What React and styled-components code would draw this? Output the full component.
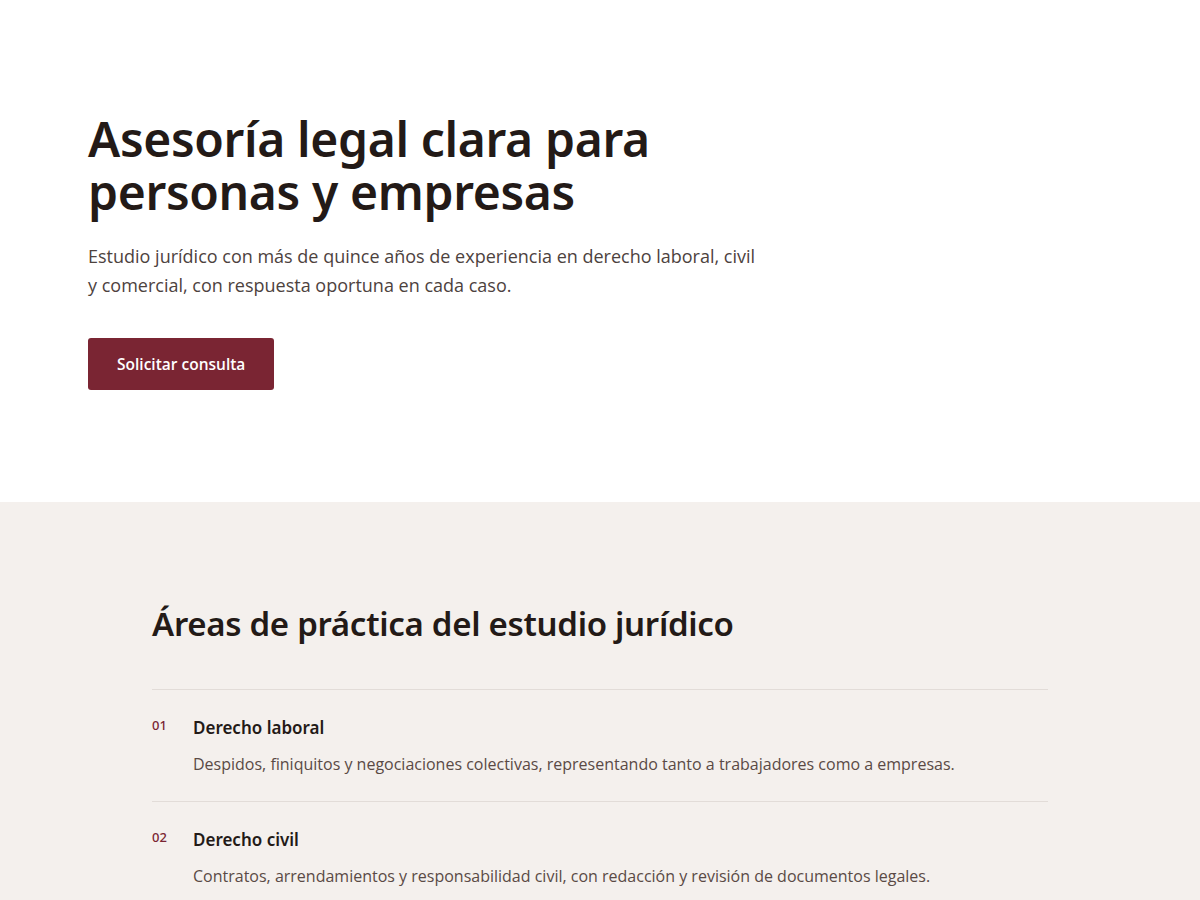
import styled, { createGlobalStyle } from 'styled-components'

const GlobalStyle = createGlobalStyle`
  * { box-sizing: border-box; }
  body {
    margin: 0;
    background: #ffffff;
    font-family: 'Open Sans', 'Noto Sans', sans-serif;
    color: #231a17;
  }
  h1, h2, h3, p { margin: 0; }
`

const areas = [
  {
    num: '01',
    title: 'Derecho laboral',
    text: 'Despidos, finiquitos y negociaciones colectivas, representando tanto a trabajadores como a empresas.',
  },
  {
    num: '02',
    title: 'Derecho civil',
    text: 'Contratos, arrendamientos y responsabilidad civil, con redacción y revisión de documentos legales.',
  },
]

function App() {
  return (
    <>
      <GlobalStyle />
      <Hero>
        <HeroInner>
          <Title>Asesoría legal clara para personas y empresas</Title>
          <Lead>
            Estudio jurídico con más de quince años de experiencia en derecho
            laboral, civil y comercial, con respuesta oportuna en cada caso.
          </Lead>
          <Button>Solicitar consulta</Button>
        </HeroInner>
      </Hero>
      <Areas>
        <AreasInner>
          <SectionTitle>Áreas de práctica del estudio jurídico</SectionTitle>
          <List>
            {areas.map((area) => (
              <Item key={area.num}>
                <Num>{area.num}</Num>
                <ItemBody>
                  <ItemTitle>{area.title}</ItemTitle>
                  <ItemText>{area.text}</ItemText>
                </ItemBody>
              </Item>
            ))}
          </List>
        </AreasInner>
      </Areas>
    </>
  )
}

export default App

const Hero = styled.section`
  background: #ffffff;
  padding: 113px 88px 112px;
`

const HeroInner = styled.div`
  max-width: 1024px;
`

const Title = styled.h1`
  font-family: 'Noto Sans', 'Open Sans', sans-serif;
  font-weight: 600;
  font-size: 48px;
  line-height: 1.1;
  letter-spacing: -0.35px;
  color: #231a17;
  max-width: 600px;
`

const Lead = styled.p`
  margin-top: 23px;
  max-width: 674px;
  font-size: 18px;
  line-height: 29px;
  color: #4d423e;
`

const Button = styled.button`
  margin-top: 38px;
  height: 52px;
  padding: 0 29px;
  border: none;
  border-radius: 3px;
  background: #7a2533;
  color: #ffffff;
  font-family: 'Open Sans', sans-serif;
  font-size: 15.5px;
  font-weight: 600;
  cursor: pointer;
`

const Areas = styled.section`
  background: #f4f0ed;
  padding: 102px 0 0;
`

const AreasInner = styled.div`
  max-width: 896px;
  margin: 0 auto;
`

const SectionTitle = styled.h2`
  font-family: 'Noto Sans', 'Open Sans', sans-serif;
  font-weight: 600;
  font-size: 33px;
  line-height: 1.2;
  letter-spacing: -0.3px;
  color: #231a17;
`

const List = styled.div`
  margin-top: 46px;
  border-top: 1px solid #e2dcd8;
`

const Item = styled.div`
  display: grid;
  grid-template-columns: 41px 1fr;
  padding: 26px 0 24px;
  border-bottom: 1px solid #e2dcd8;

  &:last-child {
    border-bottom: none;
  }
`

const Num = styled.span`
  font-family: 'Noto Sans', sans-serif;
  font-size: 13px;
  font-weight: 500;
  line-height: 18px;
  color: #7a2533;
`

const ItemBody = styled.div`
  display: flex;
  flex-direction: column;
  gap: 11px;
`

const ItemTitle = styled.h3`
  font-family: 'Noto Sans', 'Open Sans', sans-serif;
  font-size: 17px;
  font-weight: 600;
  line-height: 24px;
  color: #231a17;
`

const ItemText = styled.p`
  font-size: 16px;
  line-height: 26px;
  color: #5a4a45;
`
